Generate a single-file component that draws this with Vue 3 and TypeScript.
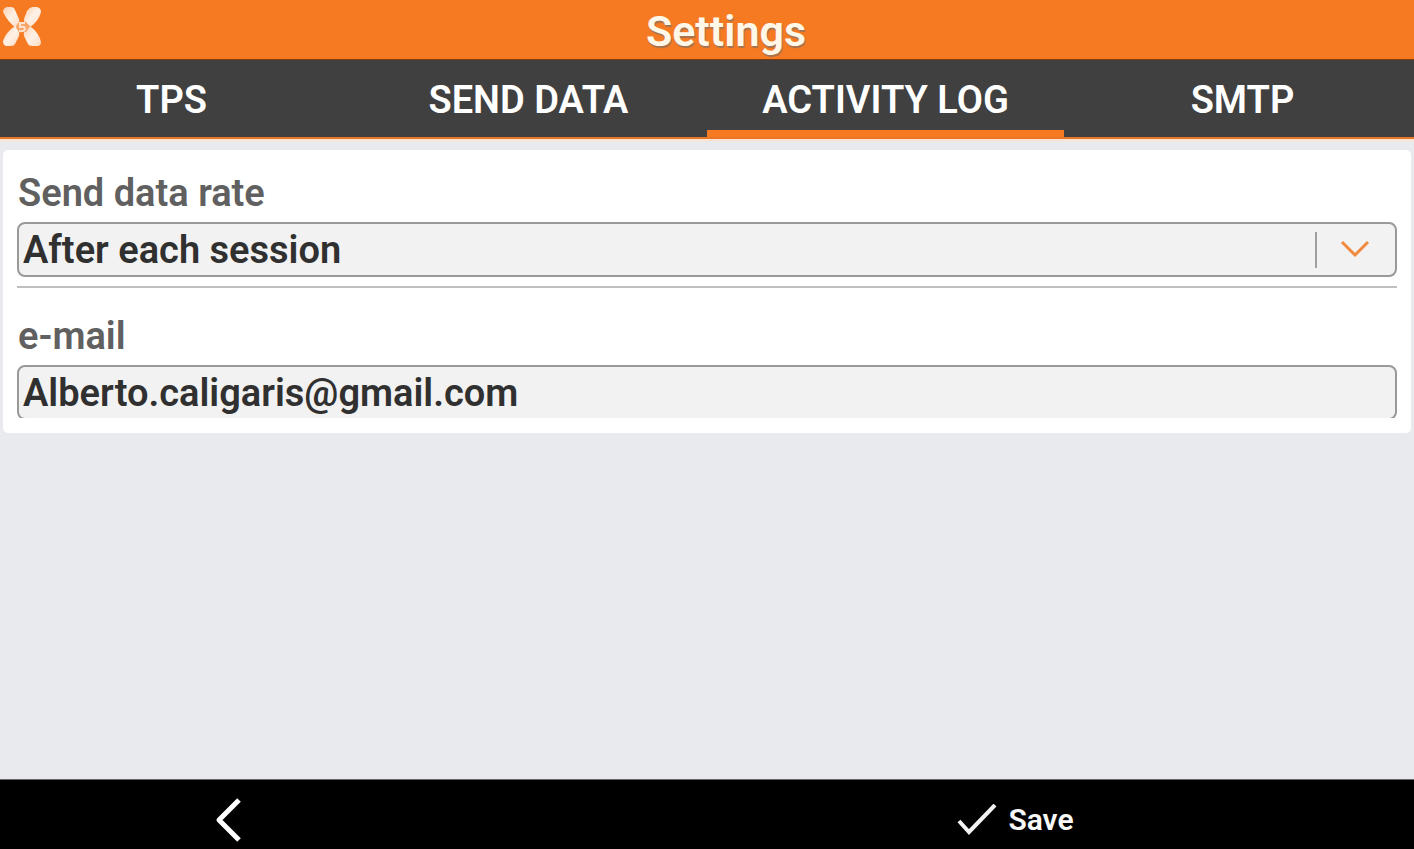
<script setup lang="ts">
import { ref } from 'vue'

const tabs: string[] = ['TPS', 'SEND DATA', 'ACTIVITY LOG', 'SMTP']
const activeTab = ref('ACTIVITY LOG')
const rate = ref('After each session')
const email = ref('Alberto.caligaris@gmail.com')
</script>

<template>
  <div class="screen">
    <header class="header">
      <svg class="logo" viewBox="0 0 40 42" aria-hidden="true">
        <defs>
          <linearGradient id="blade" x1="0" y1="0" x2="1" y2="1">
            <stop offset="0" stop-color="#fbd0b0" />
            <stop offset="0.5" stop-color="#fff1e6" />
            <stop offset="1" stop-color="#fcdcc4" />
          </linearGradient>
        </defs>
        <path d="M1 6Q1 2 5 1L9 1Q12 1 13 4L17 13Q18 16 16 19L14 22Q6 16 1 6Z" fill="url(#blade)" />
        <path d="M25 5Q27 2 30 1L35 1Q39 2 39 6Q37 15 28 21L25 19Q22 17 22 13Z" fill="url(#blade)" />
        <path d="M13 20L16 24Q18 27 17 30L13 38Q12 40 9 40L4 40Q1 39 1 35Q4 26 13 20Z" fill="url(#blade)" />
        <path d="M28 20Q37 27 39 36Q39 40 35 40L30 40Q27 40 26 38L22 30Q21 26 24 23Z" fill="url(#blade)" />
        <path d="M14 20L17 16H24L28 20L24 26H17Z" fill="#f9a468" />
        <path d="M23 17H18V21Q23 20 23 23Q22 26 17 25" fill="none" stroke="#fde3cf" stroke-width="2" />
      </svg>
      <h1 class="title">Settings</h1>
    </header>

    <nav class="tabs">
      <div class="tab-row">
        <button
          v-for="tab in tabs"
          :key="tab"
          type="button"
          class="tab"
          :class="{ active: tab === activeTab }"
          @click="activeTab = tab"
        >
          {{ tab }}
        </button>
      </div>
    </nav>

    <main class="content">
      <form id="settings" class="card" @submit.prevent>
        <div class="field">
          <label class="label" for="rate">Send data rate</label>
          <div class="select-box">
            <select id="rate" v-model="rate" class="control">
              <option>After each session</option>
            </select>
            <svg class="arrow" viewBox="0 0 82 36" aria-hidden="true">
              <path d="M1 0V36" stroke="#a0a0a0" stroke-width="2" />
              <path d="M27 10L40 23L53 10" fill="none" stroke="#f08a3c" stroke-width="3" />
            </svg>
          </div>
        </div>
        <hr class="divider" />
        <div class="field">
          <label class="label" for="email">e-mail</label>
          <div class="input-box">
            <input id="email" v-model="email" class="control" type="email" />
          </div>
        </div>
      </form>
    </main>

    <footer class="footer">
      <div class="half">
        <button type="button" class="action back" aria-label="Back">
          <svg class="back-icon" viewBox="0 0 28 46" aria-hidden="true">
            <path d="M24 3L4 23L24 43" fill="none" stroke="#fff" stroke-width="5" stroke-linecap="butt" stroke-linejoin="round" />
          </svg>
        </button>
      </div>
      <div class="half">
        <button type="submit" form="settings" class="action">
          <svg class="check-icon" viewBox="0 0 40 32" aria-hidden="true">
            <path d="M2 17L12 28L38 1" fill="none" stroke="#f2f2f2" stroke-width="4" />
          </svg>
          Save
        </button>
      </div>
    </footer>
  </div>
</template>

<style>
body {
  margin: 0;
}
</style>

<style scoped>
.screen {
  display: flex;
  flex-direction: column;
  min-height: 100vh;
  overflow: hidden;
  background: #e9eaee;
  font-family: Roboto, sans-serif;
  font-weight: 600;
}
.screen * {
  box-sizing: border-box;
}
.header {
  display: flex;
  align-items: flex-start;
  height: 59px;
  padding-left: 2px;
  background: #f67a22;
}
.logo {
  width: 40px;
  height: 42px;
  margin-top: 6px;
}
.title {
  flex: 1;
  margin: 0;
  padding-right: 4px;
  color: #fff8e8;
  font-size: 43px;
  font-weight: 600;
  line-height: 62px;
  text-align: center;
  text-shadow: 1px 2px 1px rgba(110, 110, 110, 0.6);
}
.tabs {
  border-top: 1px solid #803a0c;
  border-bottom: 2px solid #e87828;
  background: #404040;
  box-shadow: 0 2px 1px #fbe3cf;
}
.tab-row {
  display: grid;
  grid-template-columns: repeat(4, 1fr);
  margin: 0 -7px;
}
.tab {
  height: 77px;
  padding: 10px 0 0;
  border: 0;
  border-bottom: 7px solid transparent;
  background: none;
  color: #fff;
  font: inherit;
  font-size: 38px;
  line-height: 44px;
}
.tab.active {
  border-bottom-color: #f67a22;
}
.content {
  flex: 1;
  padding: 11px 3px;
}
.card {
  padding: 20px 14px 15px;
  border-radius: 5px;
  background: #fff;
}
.label {
  display: block;
  height: 52px;
  padding-left: 1px;
  color: #606060;
  font-size: 38px;
  line-height: 46px;
}
.control {
  display: block;
  width: 100%;
  height: 55px;
  margin: 0;
  padding: 0 4px;
  border: 2px solid #999;
  border-radius: 8px;
  outline: 0;
  appearance: none;
  background: #f2f2f2;
  color: #303030;
  font: inherit;
  font-size: 38px;
}
.select-box {
  position: relative;
}
.arrow {
  position: absolute;
  top: 10px;
  right: 0;
  width: 82px;
  height: 36px;
  pointer-events: none;
}
.input-box {
  height: 53px;
  overflow: hidden;
}
.divider {
  height: 2px;
  margin: 9px 0 25px;
  border: 0;
  background: #c0c0c0;
}
.footer {
  display: grid;
  grid-template-columns: 1fr 1fr;
  height: 70px;
  border-top: 1px solid #666;
  background: #000;
}
.half {
  display: flex;
  align-items: center;
  justify-content: center;
  padding-top: 11px;
}
.half:first-child {
  padding-right: 250px;
}
.half:last-child {
  padding-right: 90px;
}
.action {
  display: flex;
  align-items: center;
  gap: 11px;
  padding: 0;
  border: 0;
  background: none;
  color: #f8f8f8;
  font: inherit;
  font-size: 30px;
  line-height: 36px;
}
.back-icon {
  width: 28px;
  height: 46px;
}
.check-icon {
  width: 40px;
  height: 32px;
}
</style>
